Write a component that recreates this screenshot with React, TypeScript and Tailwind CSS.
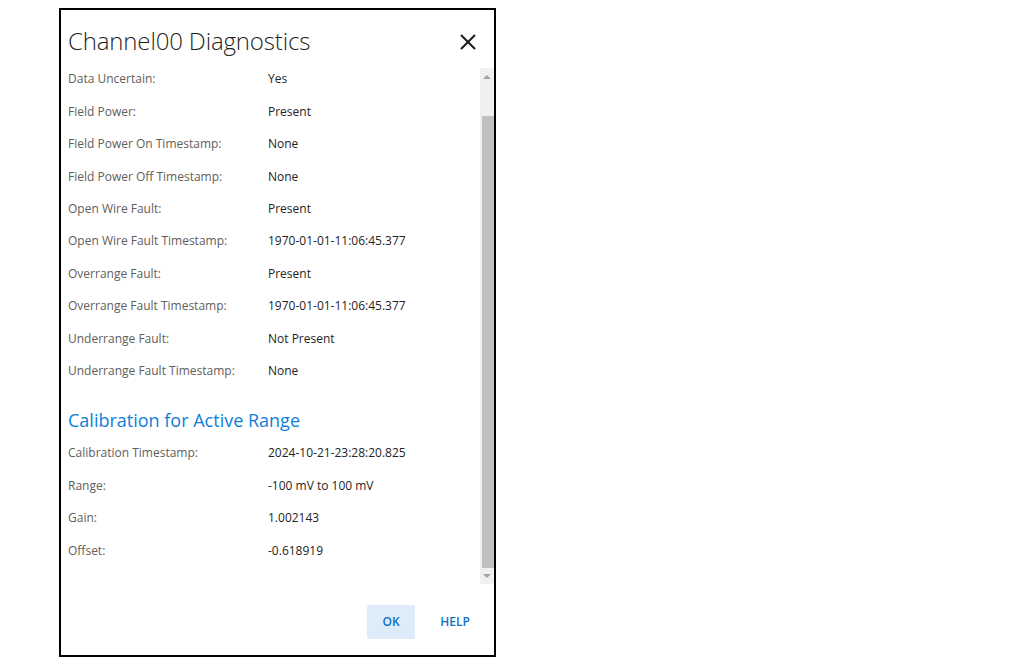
import { X } from 'lucide-react'

const statusRows: [string, string][] = [
  ['Data Uncertain:', 'Yes'],
  ['Field Power:', 'Present'],
  ['Field Power On Timestamp:', 'None'],
  ['Field Power Off Timestamp:', 'None'],
  ['Open Wire Fault:', 'Present'],
  ['Open Wire Fault Timestamp:', '1970-01-01-11:06:45.377'],
  ['Overrange Fault:', 'Present'],
  ['Overrange Fault Timestamp:', '1970-01-01-11:06:45.377'],
  ['Underrange Fault:', 'Not Present'],
  ['Underrange Fault Timestamp:', 'None'],
]

const calibrationRows: [string, string][] = [
  ['Calibration Timestamp:', '2024-10-21-23:28:20.825'],
  ['Range:', '-100 mV to 100 mV'],
  ['Gain:', '1.002143'],
  ['Offset:', '-0.618919'],
]

function Row({ label, value }: { label: string; value: string }) {
  return (
    <div className="flex items-center h-[32.45px] text-[12px]">
      <span className="w-[200px] shrink-0 text-[#5f5e5c]">{label}</span>
      <span className="text-[#252423]">{value}</span>
    </div>
  )
}

function Scrollbar() {
  return (
    <div className="w-[14px] shrink-0 bg-[#f0f0f0] flex flex-col">
      <div className="h-[17px] flex items-center justify-center">
        <div className="w-0 h-0 border-l-[4px] border-r-[4px] border-b-[4px] border-l-transparent border-r-transparent border-b-[#a3a3a3]" />
      </div>
      <div className="h-[31px]" />
      <div className="flex-1 ml-[2px] bg-[#c1c1c1]" />
      <div className="h-[16px] flex items-center justify-center">
        <div className="w-0 h-0 border-l-[4px] border-r-[4px] border-t-[4px] border-l-transparent border-r-transparent border-t-[#a3a3a3]" />
      </div>
    </div>
  )
}

export default function App() {
  return (
    <div className="w-[1035px] h-[668px] bg-white pt-[8px] pl-[59px]" style={{ fontFamily: '"Open Sans", "Noto Sans", sans-serif' }}>
      <div className="w-[437px] h-[649px] border-2 border-black bg-white flex flex-col">
        <header className="h-[58px] shrink-0 flex items-center justify-between pl-[7px] pr-[13px]">
          <h1 className="text-[24px] font-light text-[#1f1f1f] tracking-[-0.15px] pt-[4px]">Channel00 Diagnostics</h1>
          <X size={26} strokeWidth={1.9} className="text-[#1f1f1f] mt-[5px]" />
        </header>

        <div className="h-[516px] shrink-0 flex">
          <div className="flex-1 overflow-hidden pl-[7px]">
            <div className="-mt-[5px]">
              {statusRows.map(([l, v]) => <Row key={l} label={l} value={v} />)}
              <div className="h-[49.6px] pt-[20px]">
                <h2 className="text-[18px] leading-[26px] text-[#0f7fd6]">Calibration for Active Range</h2>
              </div>
              {calibrationRows.map(([l, v]) => <Row key={l} label={l} value={v} />)}
            </div>
          </div>
          <Scrollbar />
        </div>

        <footer className="flex-1 flex items-start justify-end gap-[16px] pt-[21px] pr-[15px]">
          <button className="w-[48px] h-[34px] rounded-[2px] bg-[#deecf9] text-[#0f6fc6] text-[12px] font-semibold">OK</button>
          <button className="w-[48px] h-[34px] rounded-[2px] text-[#0f6fc6] text-[12px] font-semibold">HELP</button>
        </footer>
      </div>
    </div>
  )
}
